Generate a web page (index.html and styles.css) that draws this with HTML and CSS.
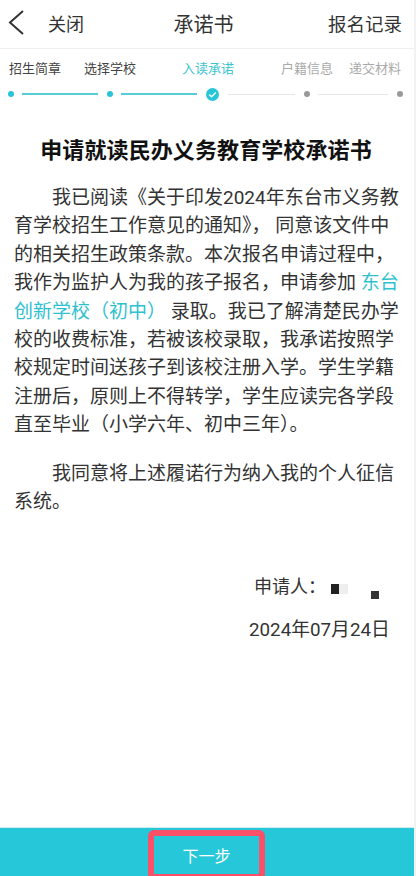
FILE: index.html
```html
<!DOCTYPE html>
<html lang="zh">
<head>
    <meta charset="UTF-8">
    <meta name="viewport" content="width=device-width, initial-scale=1.0">
    <title>承诺书</title>
    <link rel="stylesheet" href="styles.css">
</head>
<body>
    <div class="page">
        <header class="navbar">
            <div class="nav-left">
                <svg class="back-icon" width="16" height="26" viewBox="0 0 16 26">
                    <path d="M15 1 L2 12.5 L15 24" fill="none" stroke="#333" stroke-width="2"/>
                </svg>
                <span class="close-text">关闭</span>
            </div>
            <div class="nav-title">承诺书</div>
            <div class="nav-right">报名记录</div>
        </header>

        <div class="steps">
            <div class="step-labels">
                <span class="step-label done label-a">招生简章</span>
                <span class="step-label done label-b">选择学校</span>
                <span class="step-label active label-c">入读承诺</span>
                <span class="step-label label-d">户籍信息</span>
                <span class="step-label label-e">递交材料</span>
            </div>
            <div class="step-track">
                <span class="dot on"></span>
                <span class="line on line-a"></span>
                <span class="dot on"></span>
                <span class="line on line-b"></span>
                <span class="check">
                    <svg width="13" height="13" viewBox="0 0 13 13">
                        <path d="M3.2 6.6 L5.5 8.8 L9.8 4.4" fill="none" stroke="#fff" stroke-width="1.4"/>
                    </svg>
                </span>
                <span class="line line-c"></span>
                <span class="dot off"></span>
                <span class="line line-d"></span>
                <span class="dot off"></span>
            </div>
        </div>

        <main class="letter">
            <h1 class="letter-title">申请就读民办义务教育学校承诺书</h1>
            <p class="para">我已阅读《关于印发2024年东台市义务教育学校招生工作意见的通知》， 同意该文件中的相关招生政策条款。本次报名申请过程中，我作为监护人为我的孩子报名，申请参加 <span class="school">东台创新学校（初中）</span> 录取。我已了解清楚民办学校的收费标准，若被该校录取，我承诺按照学校规定时间送孩子到该校注册入学。学生学籍注册后，原则上不得转学，学生应读完各学段直至毕业（小学六年、初中三年）。</p>
            <p class="para para-second">我同意将上述履诺行为纳入我的个人征信系统。</p>
            <div class="sign">
                <div class="sign-name">
                    <span>申请人：</span>
                    <span class="mask mask-a"></span>
                    <span class="mask mask-b"></span>
                </div>
                <div class="sign-date">2024年07月24日</div>
            </div>
        </main>

        <footer class="bottom-bar">
            <button class="next-btn">下一步</button>
        </footer>
    </div>
</body>
</html>
```

FILE: styles.css
```css
* {
    box-sizing: border-box;
}
html, body {
    margin: 0;
    padding: 0;
}
body {
    font-family: "Roboto", "Noto Sans CJK SC", sans-serif;
    background-color: #fff;
    color: #333;
}
.page {
    width: 416px;
    height: 876px;
    display: flex;
    flex-direction: column;
    overflow: hidden;
    border-right: 2px solid #f2f2f2;
}
.navbar {
    height: 49px;
    flex: none;
    display: flex;
    align-items: center;
    justify-content: space-between;
    padding: 0 12px 2px 8px;
    border-bottom: 1px solid #eee;
}
.nav-left {
    display: flex;
    align-items: center;
}
.close-text {
    font-size: 18px;
    margin-left: 24px;
}
.nav-title {
    font-size: 20px;
    margin-left: -5px;
}
.nav-right {
    font-size: 18.5px;
}
.steps {
    flex: none;
    padding-top: 11px;
}
.step-labels {
    display: flex;
    font-size: 13px;
    line-height: 18px;
    padding-left: 9px;
}
.step-label {
    color: #aaa;
}
.step-label.done {
    color: #444;
}
.step-label.active {
    color: #3cc5d0;
}
.label-b {
    margin-left: 23px;
}
.label-c {
    margin-left: 46px;
}
.label-d {
    margin-left: 47px;
}
.label-e {
    margin-left: 16px;
}
.step-track {
    display: flex;
    align-items: center;
    height: 14px;
    margin-top: 9px;
    padding-left: 8px;
}
.dot {
    width: 6px;
    height: 6px;
    border-radius: 50%;
    flex: none;
}
.dot.on {
    background-color: #26c6d8;
}
.dot.off {
    background-color: #999;
}
.line {
    height: 1px;
    background-color: #e6e6e6;
    flex: none;
}
.line.on {
    height: 1.5px;
    background-color: #55ccd6;
}
.line-a {
    width: 76px;
    margin: 0 9px 0 8px;
}
.line-b {
    width: 76px;
    margin: 0 9px 0 8px;
}
.line-c {
    width: 67px;
    margin: 0 9px;
}
.line-d {
    width: 70px;
    margin: 0 9px 0 8px;
}
.check {
    width: 13px;
    height: 13px;
    border-radius: 50%;
    background-color: #26c6d8;
    display: flex;
    flex: none;
    align-items: center;
    justify-content: center;
}
.letter {
    flex: 1;
    padding: 0 14px;
}
.letter-title {
    margin: 36px 0 0;
    padding-right: 2px;
    font-size: 22px;
    line-height: 28px;
    font-weight: 700;
    letter-spacing: 0.1px;
    text-align: center;
    color: #111;
}
.para {
    margin: 19px 0 0;
    font-size: 19px;
    line-height: 28.4px;
    text-indent: 2em;
}
.para-second {
    margin-top: 20px;
}
.school {
    color: #2fc1cf;
}
.sign {
    margin-top: 59px;
    font-size: 18px;
    line-height: 24px;
}
.sign-name {
    display: flex;
    align-items: center;
    padding-left: 240px;
}
.mask {
    display: inline-block;
    flex: none;
}
.mask-a {
    width: 17px;
    height: 10px;
    margin-left: 5px;
    margin-top: 4px;
    background: linear-gradient(to right, #222 0 8px, #eee 8px);
}
.mask-b {
    width: 8px;
    height: 8px;
    margin-left: 23px;
    margin-top: 16px;
    background-color: #333;
}
.sign-date {
    margin-top: 19px;
    padding-left: 235px;
    white-space: nowrap;
    font-size: 18.8px;
}
.bottom-bar {
    height: 49px;
    flex: none;
    background-color: #25c7d9;
    border-top: 1px solid #cfeef2;
    display: flex;
    justify-content: center;
}
.next-btn {
    width: 117px;
    height: 50px;
    margin: 2px 0 0 -1px;
    border: 6px solid #fb5068;
    border-radius: 6px;
    background: transparent;
    color: #fff;
    font-family: inherit;
    font-size: 16px;
    padding: 0;
}
```
